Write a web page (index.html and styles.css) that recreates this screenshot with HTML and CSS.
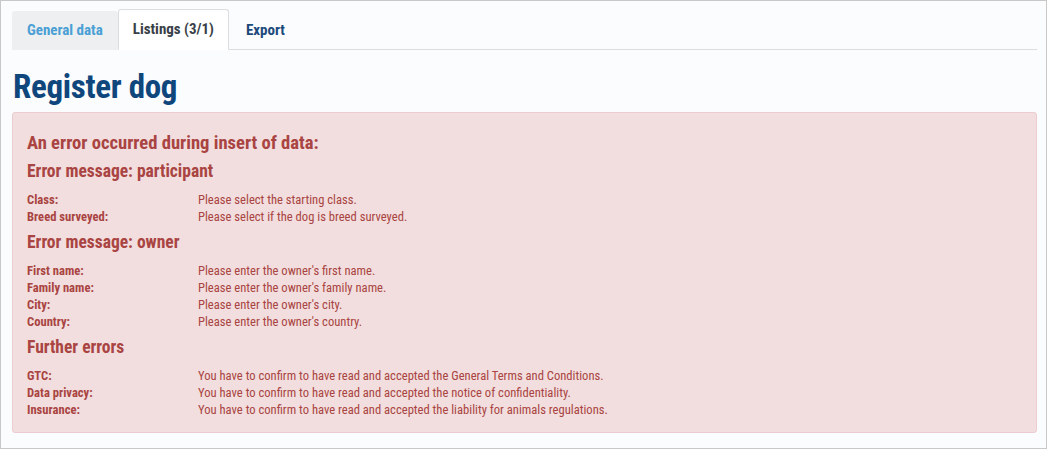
FILE: index.html
```html
<!DOCTYPE html>
<html>
<head>
<meta charset="utf-8" />
<title>Register dog</title>
<link rel="stylesheet" href="styles.css">
</head>
<body>
<div class="page">
	<ul class="tabs">
		<li><a href="#">General data</a></li>
		<li class="active"><a href="#">Listings (3/1)</a></li>
		<li><a href="#">Export</a></li>
	</ul>

	<h1>Register dog</h1>

	<div class="alert">
		<h3>An error occurred during insert of data:</h3>

		<h4>Error message: participant</h4>
		<dl>
			<dt>Class:</dt><dd>Please select the starting class.</dd>
			<dt>Breed surveyed:</dt><dd>Please select if the dog is breed surveyed.</dd>
		</dl>

		<h4>Error message: owner</h4>
		<dl>
			<dt>First name:</dt><dd>Please enter the owner's first name.</dd>
			<dt>Family name:</dt><dd>Please enter the owner's family name.</dd>
			<dt>City:</dt><dd>Please enter the owner's city.</dd>
			<dt>Country:</dt><dd>Please enter the owner's country.</dd>
		</dl>

		<h4>Further errors</h4>
		<dl>
			<dt>GTC:</dt><dd>You have to confirm to have read and accepted the General Terms and Conditions.</dd>
			<dt>Data privacy:</dt><dd>You have to confirm to have read and accepted the notice of confidentiality.</dd>
			<dt>Insurance:</dt><dd>You have to confirm to have read and accepted the liability for animals regulations.</dd>
		</dl>
	</div>
</div>
</body>
</html>
```

FILE: styles.css
```css
*{ margin:0; padding:0; box-sizing:border-box;}
li{ list-style:none;}
html,body{ height:100%;}
body{ font-family:"Roboto", "Liberation Sans", sans-serif; font-stretch:condensed; background:#fff;}
.page{ height:449px; border:1px solid #c8c8c8; background:#fbfcfe; padding:8px 9px 0 11px;}

.tabs{ display:flex; border-bottom:1px solid #dcdde0; height:41px; align-items:flex-end;}
.tabs li{ margin-bottom:-1px;}
.tabs a{ display:block; height:39px; line-height:39px; padding:0 17px; font-size:15px; font-weight:bold; text-decoration:none; color:#1c4a7b;}
.tabs li:first-child a{ background:#eeeff0; color:#4aa0d5; border-radius:3px 3px 0 0; padding:0 15px;}
.tabs li.active a{ background:#fff; color:#3a3f48; border:1px solid #dcdde0; border-bottom-color:#fff; border-radius:3px 3px 0 0; height:41px; line-height:39px; padding:0 14px;}

h1{ font-size:33px; font-weight:bold; color:#0f477d; line-height:38px; margin:18px 0 6px 1px; letter-spacing:-0.3px;}

.alert{ background:#f2dede; border:1px solid #ebccd1; border-radius:3px; color:#a94442; padding:18px 14px 8px 14px;}
.alert h3{ font-size:18.6px; line-height:24px; margin-bottom:5px;}
.alert h4{ font-size:17.5px; line-height:22px; margin:0 0 9px;}
.alert dl{ display:grid; grid-template-columns:171px 1fr; font-size:12.6px; line-height:17px; margin-bottom:6px;}
.alert dt{ font-weight:bold;}
```
